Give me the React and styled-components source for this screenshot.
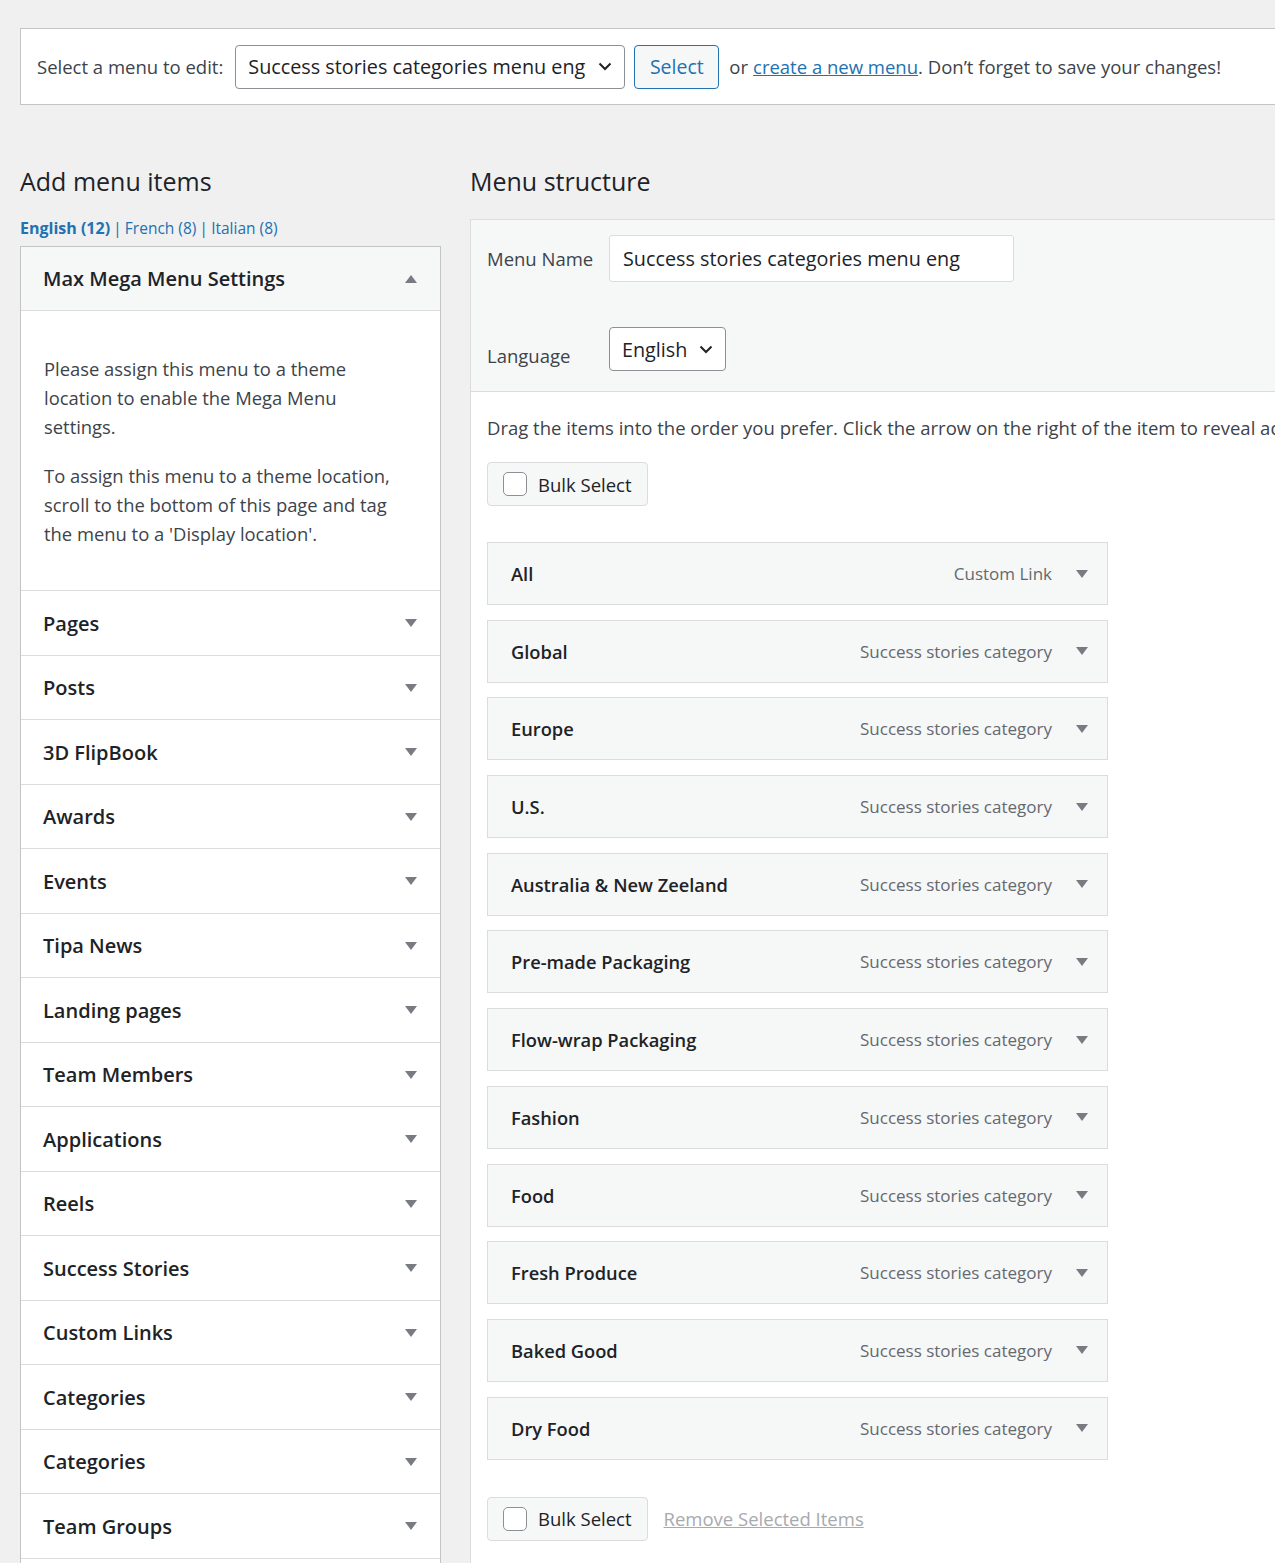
import React from 'react';
import styled, { createGlobalStyle } from 'styled-components';

const GlobalStyle = createGlobalStyle`
  body {
    margin: 0;
    background: #f0f0f1;
    font-family: "Open Sans", "Noto Sans", sans-serif;
    color: #3c434a;
    overflow: hidden;
  }
`;

const Page = styled.div`
  width: 1560px;
  padding: 28px 0 0 20px;
`;

const TopBar = styled.div`
  display: flex;
  align-items: center;
  height: 77px;
  box-sizing: border-box;
  background: #fff;
  border: 1px solid #c3c4c7;
  padding: 0 16px;
  font-size: 18.5px;
  white-space: nowrap;
`;

const Label = styled.span`
  margin-right: 12px;
`;

const SelectBox = styled.div`
  display: flex;
  align-items: center;
  justify-content: space-between;
  box-sizing: border-box;
  width: ${(p) => p.$width}px;
  height: 44px;
  padding: 0 12px;
  background: #fff;
  border: 1px solid #8c8f94;
  border-radius: 4px;
  color: #1d2327;
  font-size: 19.8px;
`;

const Button = styled.div`
  display: flex;
  align-items: center;
  justify-content: center;
  box-sizing: border-box;
  width: 85px;
  height: 44px;
  margin: 0 10px 0 9px;
  background: #f6f7f7;
  border: 1px solid #2271b1;
  border-radius: 4px;
  color: #2271b1;
  font-size: 19.5px;
`;

const Link = styled.a`
  color: #2271b1;
  text-decoration: underline;
  margin-left: 5px;
`;

const Columns = styled.div`
  display: flex;
  gap: 29px;
  margin-top: 59px;
`;

const LeftCol = styled.div`
  width: 421px;
  flex-shrink: 0;
`;

const RightCol = styled.div`
  flex: 1;
`;

const Heading = styled.h2`
  margin: 0;
  font-size: 25px;
  line-height: 34px;
  font-weight: 500;
  color: #1d2327;
`;

const LangLinks = styled.div`
  margin: 18px 0 6px;
  font-size: 16px;
  line-height: 24px;
  color: #2271b1;
`;

const LangLink = styled.a`
  color: #2271b1;
  font-weight: ${(p) => (p.$current ? 700 : 400)};
  font-size: ${(p) => (p.$current ? 16 : 15.5)}px;
  text-decoration: none;
  margin: 0 3px;
  &:first-child {
    margin-left: 0;
  }
`;

const Accordion = styled.div`
  border-left: 1px solid #c3c4c7;
  border-right: 1px solid #c3c4c7;
  background: #fff;
`;

const Section = styled.div`
  display: flex;
  align-items: center;
  justify-content: space-between;
  box-sizing: border-box;
  height: ${(p) => (p.$head ? 65 : 64.5)}px;
  padding: 0 23px 0 22px;
  background: ${(p) => (p.$head ? '#f6f7f7' : '#fff')};
  border-top: 1px solid ${(p) => (p.$head ? '#c3c4c7' : 'transparent')};
  border-bottom: 1px solid #dcdcde;
  font-size: 20px;
  font-weight: 600;
  color: #1d2327;
`;

const Notice = styled.div`
  box-sizing: border-box;
  height: 280px;
  padding: 43px 40px 0 23px;
  border-bottom: 1px solid #dcdcde;
  font-size: 18.4px;
  line-height: 29px;
  color: #3c434a;
  p {
    margin: 0 0 20px;
  }
`;

const Panel = styled.div`
  margin-top: 21px;
  border-left: 1px solid #dcdcde;
  border-top: 1px solid #dcdcde;
  background: #fff;
  min-height: 1400px;
`;

const PanelHead = styled.div`
  background: #f6f7f7;
  border-bottom: 1px solid #dcdcde;
  padding: 15px 16px 20px;
  display: flex;
  flex-direction: column;
  gap: 45px;
`;

const FieldRow = styled.div`
  display: flex;
  align-items: ${(p) => (p.$low ? 'flex-end' : 'center')};
  font-size: 18.5px;
`;

const FieldLabel = styled.span`
  width: 122px;
  flex-shrink: 0;
  padding-bottom: ${(p) => (p.$low ? '3px' : '0')};
`;

const TextInput = styled.div`
  display: flex;
  align-items: center;
  box-sizing: border-box;
  width: 405px;
  height: 47px;
  padding: 0 13px;
  background: #fff;
  border: 1px solid #dcdcde;
  border-radius: 3px;
  color: #1d2327;
  font-size: 19.8px;
`;

const PanelBody = styled.div`
  padding: 22px 16px 0;
`;

const Intro = styled.div`
  font-size: 18.5px;
  line-height: 28px;
  white-space: nowrap;
  color: #3c434a;
`;

const BulkRow = styled.div`
  display: flex;
  align-items: center;
  gap: 16px;
  margin-top: ${(p) => p.$top}px;
`;

const BulkBox = styled.div`
  display: flex;
  align-items: center;
  gap: 11px;
  box-sizing: border-box;
  height: 44px;
  padding: 0 15px;
  background: #f6f7f7;
  border: 1px solid #dcdcde;
  border-radius: 4px;
  font-size: 18.5px;
  color: #1d2327;
`;

const Checkbox = styled.span`
  width: 24px;
  height: 24px;
  box-sizing: border-box;
  border: 1px solid #8c8f94;
  border-radius: 5px;
  background: #fff;
`;

const RemoveLink = styled.a`
  color: #a7aaad;
  text-decoration: underline;
  font-size: 18.5px;
`;

const ItemList = styled.div`
  display: flex;
  flex-direction: column;
  gap: 14.7px;
  width: 621px;
  margin-top: 36px;
`;

const Item = styled.div`
  display: flex;
  align-items: center;
  box-sizing: border-box;
  height: 63px;
  padding: 0 19px 0 23px;
  background: #f6f7f7;
  border: 1px solid #dcdcde;
`;

const ItemTitle = styled.span`
  flex: 1;
  font-size: 18.3px;
  font-weight: 600;
  color: #1d2327;
`;

const ItemType = styled.span`
  font-size: 17px;
  color: #646970;
  margin-right: 24px;
`;

const Triangle = ({ up }) => (
  <svg width="12" height="8" viewBox="0 0 12 8" style={{ flexShrink: 0 }}>
    <path d={up ? 'M0 8 L6 0 L12 8 Z' : 'M0 0 L12 0 L6 8 Z'} fill="#787c82" />
  </svg>
);

const Chevron = () => (
  <svg width="14" height="9" viewBox="0 0 14 9">
    <path d="M1.5 1.5 L7 7 L12.5 1.5" fill="none" stroke="#1d2327" strokeWidth="2" />
  </svg>
);

const sections = [
  'Pages', 'Posts', '3D FlipBook', 'Awards', 'Events', 'Tipa News', 'Landing pages',
  'Team Members', 'Applications', 'Reels', 'Success Stories', 'Custom Links',
  'Categories', 'Categories', 'Team Groups',
];

const items = [
  ['All', 'Custom Link'],
  ['Global', 'Success stories category'],
  ['Europe', 'Success stories category'],
  ['U.S.', 'Success stories category'],
  ['Australia & New Zeeland', 'Success stories category'],
  ['Pre-made Packaging', 'Success stories category'],
  ['Flow-wrap Packaging', 'Success stories category'],
  ['Fashion', 'Success stories category'],
  ['Food', 'Success stories category'],
  ['Fresh Produce', 'Success stories category'],
  ['Baked Good', 'Success stories category'],
  ['Dry Food', 'Success stories category'],
];

const App = () => (
  <Page>
    <GlobalStyle />
    <TopBar>
      <Label>Select a menu to edit:</Label>
      <SelectBox $width={390}>
        Success stories categories menu eng
        <Chevron />
      </SelectBox>
      <Button>Select</Button>
      or <Link>create a new menu</Link>. Don’t forget to save your changes!
    </TopBar>

    <Columns>
      <LeftCol>
        <Heading>Add menu items</Heading>
        <LangLinks>
          <LangLink $current>English (12)</LangLink>|<LangLink>French (8)</LangLink>|<LangLink>Italian (8)</LangLink>
        </LangLinks>
        <Accordion>
          <Section $head>
            Max Mega Menu Settings
            <Triangle up />
          </Section>
          <Notice>
            <p>Please assign this menu to a theme location to enable the Mega Menu settings.</p>
            <p>To assign this menu to a theme location, scroll to the bottom of this page and tag the menu to a 'Display location'.</p>
          </Notice>
          {sections.map((name, i) => (
            <Section key={i}>
              {name}
              <Triangle />
            </Section>
          ))}
          <Section />
        </Accordion>
      </LeftCol>

      <RightCol>
        <Heading>Menu structure</Heading>
        <Panel>
          <PanelHead>
            <FieldRow>
              <FieldLabel>Menu Name</FieldLabel>
              <TextInput>Success stories categories menu eng</TextInput>
            </FieldRow>
            <FieldRow $low>
              <FieldLabel $low>Language</FieldLabel>
              <SelectBox $width={117}>
                English
                <Chevron />
              </SelectBox>
            </FieldRow>
          </PanelHead>
          <PanelBody>
            <Intro>
              Drag the items into the order you prefer. Click the arrow on the right of the item to reveal additional configuration options.
            </Intro>
            <BulkRow $top={20}>
              <BulkBox>
                <Checkbox />
                Bulk Select
              </BulkBox>
            </BulkRow>
            <ItemList>
              {items.map(([title, type]) => (
                <Item key={title}>
                  <ItemTitle>{title}</ItemTitle>
                  <ItemType>{type}</ItemType>
                  <Triangle />
                </Item>
              ))}
            </ItemList>
            <BulkRow $top={37}>
              <BulkBox>
                <Checkbox />
                Bulk Select
              </BulkBox>
              <RemoveLink>Remove Selected Items</RemoveLink>
            </BulkRow>
          </PanelBody>
        </Panel>
      </RightCol>
    </Columns>
  </Page>
);

export default App;
